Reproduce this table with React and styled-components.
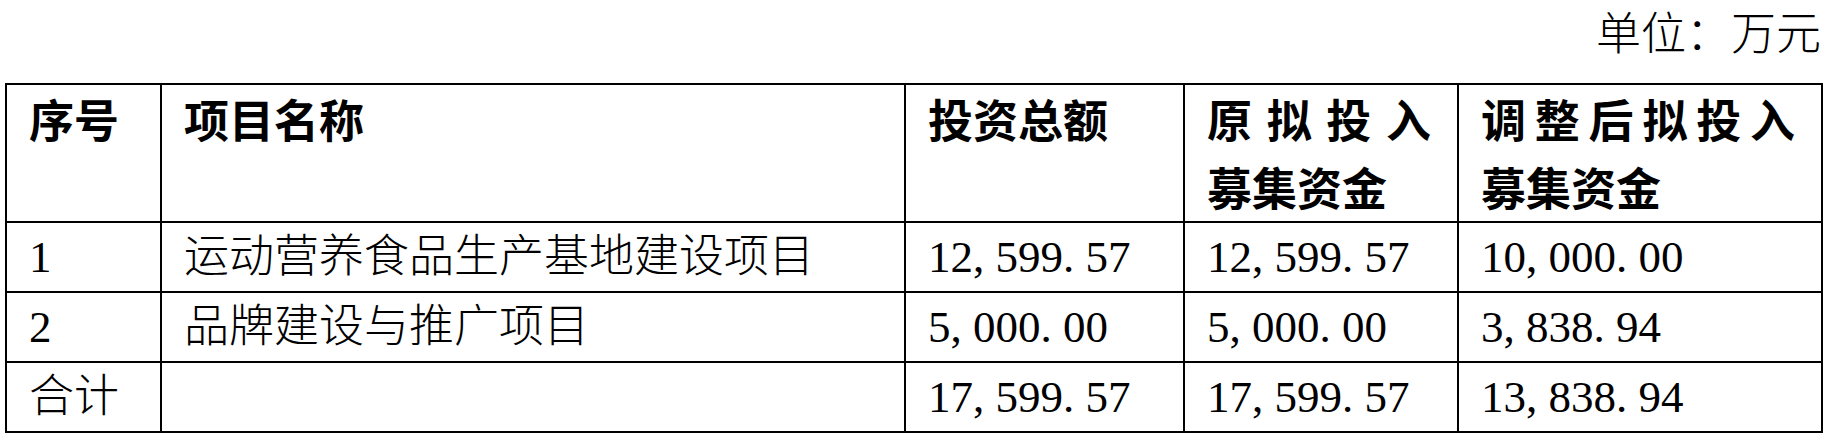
import React from 'react';
import styled, { createGlobalStyle } from 'styled-components';

const GlobalStyle = createGlobalStyle`
  html, body {
    margin: 0;
    padding: 0;
    background: #fff;
  }
  body {
    font-family: "Liberation Serif", "Noto Sans CJK SC", serif;
    color: #000;
  }
`;

const columns = [155, 744, 279, 274, 364];

const rows = [
  { no: '1', name: '运动营养食品生产基地建设项目', total: '12,599.57', planned: '12,599.57', adjusted: '10,000.00' },
  { no: '2', name: '品牌建设与推广项目', total: '5,000.00', planned: '5,000.00', adjusted: '3,838.94' },
  { no: '合计', name: '', total: '17,599.57', planned: '17,599.57', adjusted: '13,838.94' },
];

function Amount({ value }) {
  return value.split('').map((ch, i) =>
    ch === ',' || ch === '.' ? <Punct key={i}>{ch}</Punct> : ch
  );
}

export default function App() {
  return (
    <>
      <GlobalStyle />
      <Page>
        <Unit>单位：万元</Unit>
        <Table>
          <colgroup>
            {columns.map((w, i) => (
              <col key={i} style={{ width: w }} />
            ))}
          </colgroup>
          <thead>
            <tr>
              <HeadCell>序号</HeadCell>
              <HeadCell>项目名称</HeadCell>
              <HeadCell>投资总额</HeadCell>
              <HeadCell justify>原拟投入募集资金</HeadCell>
              <HeadCell justify>调整后拟投入募集资金</HeadCell>
            </tr>
          </thead>
          <tbody>
            {rows.map(row => (
              <tr key={row.no}>
                <Cell>{row.no}</Cell>
                <Cell>{row.name}</Cell>
                <Cell><Amount value={row.total} /></Cell>
                <Cell><Amount value={row.planned} /></Cell>
                <Cell><Amount value={row.adjusted} /></Cell>
              </tr>
            ))}
          </tbody>
        </Table>
      </Page>
    </>
  );
}

const Page = styled.div`
  display: flex;
  flex-direction: column;
  width: 1816px;
  padding-left: 5px;
`;

const Unit = styled.div`
  font-family: "Noto Sans CJK SC", sans-serif;
  font-size: 45px;
  line-height: 62px;
  text-align: right;
  margin-bottom: 21px;
  font-weight: 300;
`;

const Table = styled.table`
  width: 1816px;
  table-layout: fixed;
  border-collapse: collapse;
  font-size: 45px;
`;

const HeadCell = styled.th`
  border: 2.5px solid #000;
  padding: 0 26px 0 22px;
  vertical-align: top;
  text-align: ${props => (props.justify ? 'justify' : 'left')};
  font-family: "Noto Sans CJK SC", sans-serif;
  font-weight: 700;
  line-height: 68px;
  height: 136px;
`;

const Cell = styled.td`
  border: 2.5px solid #000;
  padding: 0 26px 0 22px;
  vertical-align: middle;
  text-align: left;
  font-family: "Liberation Serif", "Noto Sans CJK SC", serif;
  font-weight: 300;
  line-height: 68px;
  white-space: nowrap;
`;

const Punct = styled.span`
  display: inline-block;
  width: 0.5em;
  text-align: left;
`;
